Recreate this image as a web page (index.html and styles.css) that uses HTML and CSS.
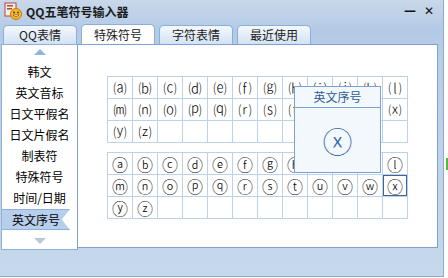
FILE: index.html
```html
<!DOCTYPE html>
<html lang="zh-CN">
<head>
    <meta charset="UTF-8">
    <title>QQ五笔符号输入器</title>
    <link rel="stylesheet" href="styles.css">
</head>
<body>
    <div class="window">
        <div class="titlebar">
            <span class="app-icon">
                <svg width="18" height="18" viewBox="0 0 18 18">
                    <rect x="1" y="1" width="11" height="13" fill="#f4ece6" stroke="#b04a3a"/>
                    <rect x="3" y="3" width="6" height="1.5" fill="#b04a3a"/>
                    <rect x="3" y="6" width="5" height="1.5" fill="#b04a3a"/>
                    <circle cx="12" cy="12" r="5.5" fill="#f6b826" stroke="#c97a0a"/>
                    <circle cx="10" cy="10.5" r="1" fill="#6a3a00"/>
                    <circle cx="14" cy="10.5" r="1" fill="#6a3a00"/>
                    <path d="M9 13 Q12 16.5 15 13 Z" fill="#fff" stroke="#6a3a00" stroke-width="0.6"/>
                </svg>
            </span>
            <span class="title">QQ五笔符号输入器</span>
            <span class="win-btn min">&#8212;</span>
            <span class="win-btn close">&#10005;</span>
        </div>

        <div class="tabs">
            <div class="tab">QQ表情</div>
            <div class="tab active">特殊符号</div>
            <div class="tab">字符表情</div>
            <div class="tab">最近使用</div>
        </div>

        <div class="content">
            <div class="sidebar">
                <div class="arrow up"></div>
                <ul class="cats">
                    <li>韩文</li>
                    <li>英文音标</li>
                    <li>日文平假名</li>
                    <li>日文片假名</li>
                    <li>制表符</li>
                    <li>特殊符号</li>
                    <li>时间/日期</li>
                    <li class="selected">英文序号</li>
                </ul>
                <div class="arrow down"></div>
            </div>

            <div class="panel">
                <div class="grid paren">
                    <span>⒜</span><span>⒝</span><span>⒞</span><span>⒟</span><span>⒠</span><span>⒡</span>
                    <span>⒢</span><span>⒣</span><span>⒤</span><span>⒥</span><span>⒦</span><span>⒧</span>
                    <span>⒨</span><span>⒩</span><span>⒪</span><span>⒫</span><span>⒬</span><span>⒭</span>
                    <span>⒮</span><span>⒯</span><span>⒰</span><span>⒱</span><span>⒲</span><span>⒳</span>
                    <span>⒴</span><span>⒵</span><span></span><span></span><span></span><span></span>
                    <span></span><span></span><span></span><span></span><span></span><span></span>
                </div>
                <div class="grid circled">
                    <span>ⓐ</span><span>ⓑ</span><span>ⓒ</span><span>ⓓ</span><span>ⓔ</span><span>ⓕ</span>
                    <span>ⓖ</span><span>ⓗ</span><span>ⓘ</span><span>ⓙ</span><span>ⓚ</span><span>ⓛ</span>
                    <span>ⓜ</span><span>ⓝ</span><span>ⓞ</span><span>ⓟ</span><span>ⓠ</span><span>ⓡ</span>
                    <span>ⓢ</span><span>ⓣ</span><span>ⓤ</span><span>ⓥ</span><span>ⓦ</span><span class="picked">ⓧ</span>
                    <span>ⓨ</span><span>ⓩ</span><span></span><span></span><span></span><span></span>
                    <span></span><span></span><span></span><span></span><span></span><span></span>
                </div>

                <!-- preview of the hovered symbol -->
                <div class="preview">
                    <div class="preview-title">英文序号</div>
                    <div class="preview-char">ⓧ</div>
                </div>
            </div>
        </div>
    </div>
    <div class="edge"></div>
</body>
</html>
```

FILE: styles.css
```css
body {
    margin: 0;
    width: 448px;
    height: 278px;
    background: #ffffff;
    font-family: "Noto Sans CJK SC", "DejaVu Sans", sans-serif;
    font-size: 12px;
    color: #000;
    position: relative;
    overflow: hidden;
}
.window {
    width: 443px;
    height: 276px;
    border-right: 1px solid #8fa9c8;
    border-bottom: 1px solid #8fa9c8;
    background: linear-gradient(to bottom, #c9d8ea 0, #b3cae5 30px, #b9cee7 60px, #c6d8eb 100%);
    display: flex;
    flex-direction: column;
}
.titlebar {
    height: 22px;
    display: flex;
    align-items: center;
    padding-left: 4px;
}
.app-icon {
    width: 18px;
    height: 18px;
    margin-right: 4px;
}
.title {
    font-weight: bold;
    font-size: 12px;
    color: #1c1c1c;
    flex: 1;
}
.win-btn {
    font-weight: bold;
    color: #111;
    font-family: "DejaVu Sans", sans-serif;
    font-size: 12px;
    margin-right: 8px;
}
.win-btn.close {
    margin-right: 9px;
}
.tabs {
    height: 22px;
    display: flex;
    align-items: flex-end;
    gap: 4px;
    padding-left: 3px;
}
.tab {
    width: 72px;
    height: 18px;
    line-height: 18px;
    text-align: center;
    border: 1px solid #8bafdb;
    border-bottom: none;
    border-radius: 5px 5px 0 0;
    background: linear-gradient(to bottom, #f4f8fd, #d3e2f4);
    color: #222;
}
.tab.active {
    height: 20px;
    line-height: 20px;
    background: #ffffff;
    position: relative;
    top: 1px;
}
.content {
    display: flex;
    height: 206px;
}
.sidebar {
    width: 75px;
    margin-left: 1px;
    background: #fff;
    border: 1px solid #8fb0d9;
    border-right-color: #7ea2d0;
    display: flex;
    flex-direction: column;
    align-items: center;
}
.arrow {
    width: 0;
    height: 0;
    border-left: 6px solid transparent;
    border-right: 6px solid transparent;
}
.arrow.up {
    border-bottom: 6px solid #8fb4df;
    margin: 4px 0 6px;
}
.arrow.down {
    border-top: 6px solid #b8c6d6;
    margin-top: 8px;
}
.cats {
    list-style: none;
    margin: 0;
    padding: 0;
    width: 100%;
}
.cats li {
    height: 21px;
    line-height: 21px;
    text-align: center;
}
.cats li.selected {
    width: 68px;
    height: 19px;
    line-height: 19px;
    margin-top: 1px;
    background: #b7cfec;
    border-top: 1px solid #8fb0d8;
    border-bottom: 1px solid #8fb0d8;
    clip-path: polygon(0 0, 100% 0, 88% 50%, 100% 100%, 0 100%);
}
.panel {
    width: 360px;
    height: 204px;
    background: #fff;
    border: 1px solid #7ea2d0;
    border-left: none;
    padding: 31px 0 0 29px;
    box-sizing: border-box;
    display: flex;
    flex-direction: column;
    gap: 9px;
    position: relative;
}
.grid {
    width: 301px;
    display: grid;
    grid-template-columns: repeat(12, 24px);
    grid-auto-rows: 21px;
    gap: 1px;
    padding: 1px;
    box-sizing: border-box;
    background: #bcd1ea;
}
.grid span {
    background: #fff;
    display: flex;
    align-items: center;
    justify-content: center;
    font-family: "Noto Sans CJK SC", sans-serif;
    font-size: 13px;
    line-height: 1;
    font-weight: 300;
}
.grid.circled span {
    font-size: 16px;
}
.grid span.picked {
    outline: 1px solid #3d6495;
    outline-offset: -1px;
}
.preview {
    position: absolute;
    left: 216px;
    top: 41px;
    width: 87px;
    height: 87px;
    box-sizing: border-box;
    background: #f3f8fd;
    border: 1px solid #7ea2d0;
}
.preview-title {
    height: 21px;
    line-height: 20px;
    text-align: center;
    color: #2c5b94;
    border-bottom: 1px solid #7ea2d0;
    box-sizing: border-box;
}
.preview-char {
    text-align: center;
    font-family: "Noto Sans CJK SC", sans-serif;
    font-weight: 300;
    font-size: 30px;
    line-height: 30px;
    margin-top: 17px;
    color: #3a68a8;
}
.edge {
    position: absolute;
    right: 0;
    top: 158px;
    width: 2px;
    height: 12px;
    background: #54b93c;
}
```
